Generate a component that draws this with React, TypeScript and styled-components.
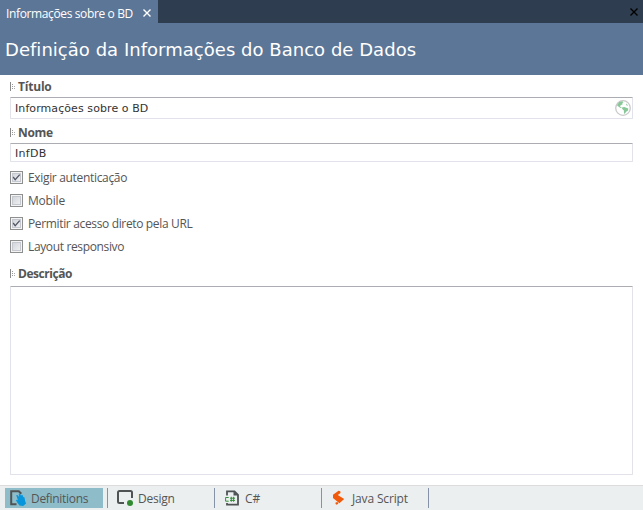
import React from "react";
import styled, { createGlobalStyle } from "styled-components";

const GlobalStyle = createGlobalStyle`
  * { box-sizing: border-box; }
  body { margin: 0; background: #fff; overflow: hidden; }
  button { border: 0; padding: 0; margin: 0; background: none; font: inherit; color: inherit; }
`;

const Window = styled.div`
  display: flex;
  flex-direction: column;
  width: 643px;
  height: 510px;
  background: #fff;
  color: #555;
  font: 12px/16px "Open Sans", "Noto Sans", sans-serif;
  white-space: nowrap;
`;

const Text = styled.span<{ $spacing?: number }>`
  letter-spacing: ${(p) => p.$spacing ?? 0}px;
`;

const TabStrip = styled.nav`
  display: flex;
  justify-content: space-between;
  height: 23px;
  background: #2e3e50;
`;

const DocumentTab = styled.div`
  display: flex;
  align-items: center;
  justify-content: space-between;
  width: 158px;
  padding: 5px 7px 0 6px;
  background: #5c7697;
  color: #fff;
`;

const TabClose = styled.button`
  display: flex;
  margin-top: -3px;
`;

const WindowClose = styled.button`
  display: flex;
  align-items: center;
  padding-right: 5px;
`;

const Header = styled.header`
  height: 52px;
  padding: 15px 5px 0;
  background: #5c7697;
`;

const Heading = styled.h1`
  margin: 0;
  color: #fff;
  font: 400 18px/24px "DejaVu Sans", Verdana, sans-serif;
  letter-spacing: 0.03px;
`;

const Form = styled.main`
  flex: 1;
  display: flex;
  flex-direction: column;
  padding: 0 10px;
`;

const FieldLabel = styled.label<{ $top: number }>`
  display: flex;
  height: 16px;
  margin-top: ${(p) => p.$top}px;
  font-weight: 700;
  gap: 3px;
`;

const Field = styled.div<{ $height: number; $top: number }>`
  display: flex;
  flex: none;
  align-items: center;
  justify-content: space-between;
  height: ${(p) => p.$height}px;
  margin-top: ${(p) => p.$top}px;
  padding: 0 1px 0 4px;
  border: 1px solid #e2e3ea;
  border-top-color: #abadb3;
  border-radius: 1px;
  color: #333;
  font: 11px/14px "DejaVu Sans", Verdana, sans-serif;
  > span { padding-top: 2px; }
`;

const CheckList = styled.div`
  display: flex;
  flex-direction: column;
  gap: 7px;
  margin-top: 8px;
`;

const CheckRow = styled.label`
  display: flex;
  align-items: center;
  height: 16px;
  gap: 5px;
`;

const Box = styled.span`
  display: flex;
  width: 13px;
  height: 13px;
  margin-top: -1px;
  border: 1px solid #8e8f8f;
  background: linear-gradient(135deg, #cbcfd5, #f6f6f6);
  box-shadow: inset 0 0 0 1px #f4f4f4, inset 0 0 0 2px #c5c9cf;
`;

const Footer = styled.footer`
  display: flex;
  align-items: flex-start;
  height: 25px;
  padding: 2px 0 0 5px;
  border-top: 1px solid #dcdcdc;
  background: #ebefef;
`;

const ViewTab = styled.button<{ $active?: boolean }>`
  display: flex;
  align-items: center;
  width: 98px;
  height: 20px;
  padding-left: 4px;
  gap: 4px;
  background: ${(p) => (p.$active ? "#8ebdc9" : "transparent")};
  svg { flex: none; }
  span { margin-top: 2px; }
`;

const Separator = styled.i`
  width: 1px;
  height: 20px;
  margin: 0 4px;
  background: #8592a8;
`;

const Cross = ({ color, size }: { color: string; size: number }) => (
  <svg width={size} height={size} viewBox="0 0 8 8">
    <path d="M.5.5l7 7M7.5.5l-7 7" stroke={color} strokeWidth="1.4" />
  </svg>
);

const Grip = () => (
  <svg width="5" height="16" shapeRendering="crispEdges">
    <path d="M.5 3v9" stroke="#8a8a8a" />
    <path d="M2.5 5v6" stroke="#999" strokeDasharray="1 1" />
    <path d="M4.5 7v3" stroke="#aaa" strokeDasharray="1 1" />
  </svg>
);

const Globe = () => (
  <svg width="16" height="16" viewBox="0 0 16 16">
    <circle cx="8" cy="8" r="7.3" fill="#fff" stroke="#c9c9c9" strokeWidth="1.3" />
    <path d="M2 5l2.3-3 3-.8 1.2 1L7 3.2 8 4 5.6 5.2 5 6.5l2 1.2-1.4.2L2.6 6z" fill="#88c797" />
    <path d="M7 7.5l2.3-.5 4 1.4-.3 2-1.8 1.3-1.5 2-.7-.3-.1-2.8-1.7-1.5zM11 3.5l1.5 1.2.3 1.3-1.4-.7z" fill="#88c797" />
  </svg>
);

const Check = () => (
  <svg width="11" height="11" viewBox="0 0 11 11">
    <path d="M2.2 5l2 2.8L8.7 2.6" fill="none" stroke="#505564" strokeWidth="1.3" />
  </svg>
);

const DefinitionsIcon = () => (
  <svg width="18" height="18" viewBox="0 0 18 18">
    <path d="M7.5 15.2H2.2V2.3h7.6l2.5 2.4" fill="none" stroke="#505354" strokeWidth="2" />
    <path d="M7.2 6l1.6.2 1.3 1.8-.4-3.2 1.2-.4 1.3 2.5.2-1.2 1.1.2 1 2.3.9.1.8 4 .9 2.2-3 2.5-3.6-.5-2.3-3-1.3-2.6 1.2-.1.9.6z" fill="#0795dc" />
  </svg>
);

const DesignIcon = () => (
  <svg width="18" height="18" viewBox="0 0 18 18">
    <path d="M8 14H3.5Q2 14 2 12.5v-9Q2 2 3.5 2h11Q16 2 16 3.5V9" fill="none" stroke="#505354" strokeWidth="2" />
    <circle cx="14" cy="14" r="3" fill="#328b32" />
  </svg>
);

const CSharpIcon = () => (
  <svg width="18" height="18" viewBox="0 0 18 18">
    <path d="M4 6.5V2.3h7.5L15 5.8v9.9H4V14" fill="none" stroke="#505354" strokeWidth="1.8" />
    <path d="M10.5 2v4.5H15z" fill="#505354" />
    <path d="M5.7 8.5H2.6v3.7h3.1M8.3 7.8v5M10.6 7.8v5M7 9.2h5M7 11.4h5" fill="none" stroke="#388e3c" strokeWidth="1" />
  </svg>
);

const ScriptIcon = () => (
  <svg width="18" height="18" viewBox="0 0 18 18">
    <path d="M3 5.8l5.5-4.1 1.8.5.2 1.8L7.8 6l6.4 4-4.8 4.3L3 9zM5.6 13.6l1.8-.6 1 1.4-1.5 1.4-1.4-.7z" fill="#f15a0a" />
  </svg>
);

const options = [
  { label: "Exigir autenticação", checked: true, spacing: -0.33 },
  { label: "Mobile", checked: false, spacing: -0.2 },
  { label: "Permitir acesso direto pela URL", checked: true, spacing: -0.35 },
  { label: "Layout responsivo", checked: false, spacing: -0.36 },
];

const views = [
  { label: "Definitions", Icon: DefinitionsIcon, spacing: -0.3 },
  { label: "Design", Icon: DesignIcon, spacing: -0.25 },
  { label: "C#", Icon: CSharpIcon, spacing: 0 },
  { label: "Java Script", Icon: ScriptIcon, spacing: -0.15 },
];

export default function App() {
  return (
    <>
      <GlobalStyle />
      <Window>
        <TabStrip>
          <DocumentTab>
            <Text $spacing={-0.37}>Informações sobre o BD</Text>
            <TabClose aria-label="Fechar aba"><Cross color="#fff" size={8} /></TabClose>
          </DocumentTab>
          <WindowClose aria-label="Fechar"><Cross color="#000" size={8} /></WindowClose>
        </TabStrip>
        <Header>
          <Heading>Definição da Informações do Banco de Dados</Heading>
        </Header>
        <Form>
          <FieldLabel $top={4}><Grip /><Text $spacing={-0.2}>Título</Text></FieldLabel>
          <Field $height={22} $top={2}><Text $spacing={0.08}>Informações sobre o BD</Text><Globe /></Field>
          <FieldLabel $top={6}><Grip /><Text $spacing={-0.35}>Nome</Text></FieldLabel>
          <Field $height={19} $top={2}><Text $spacing={0.3}>InfDB</Text></Field>
          <CheckList>
            {options.map((o) => (
              <CheckRow key={o.label}>
                <Box>{o.checked && <Check />}</Box>
                <Text $spacing={o.spacing}>{o.label}</Text>
              </CheckRow>
            ))}
          </CheckList>
          <FieldLabel $top={11}><Grip /><Text $spacing={-0.45}>Descrição</Text></FieldLabel>
          <Field $height={189} $top={4} />
        </Form>
        <Footer>
          {views.map(({ label, Icon, spacing }, i) => (
            <React.Fragment key={label}>
              <ViewTab $active={i === 0}><Icon /><Text $spacing={spacing}>{label}</Text></ViewTab>
              <Separator />
            </React.Fragment>
          ))}
        </Footer>
      </Window>
    </>
  );
}
